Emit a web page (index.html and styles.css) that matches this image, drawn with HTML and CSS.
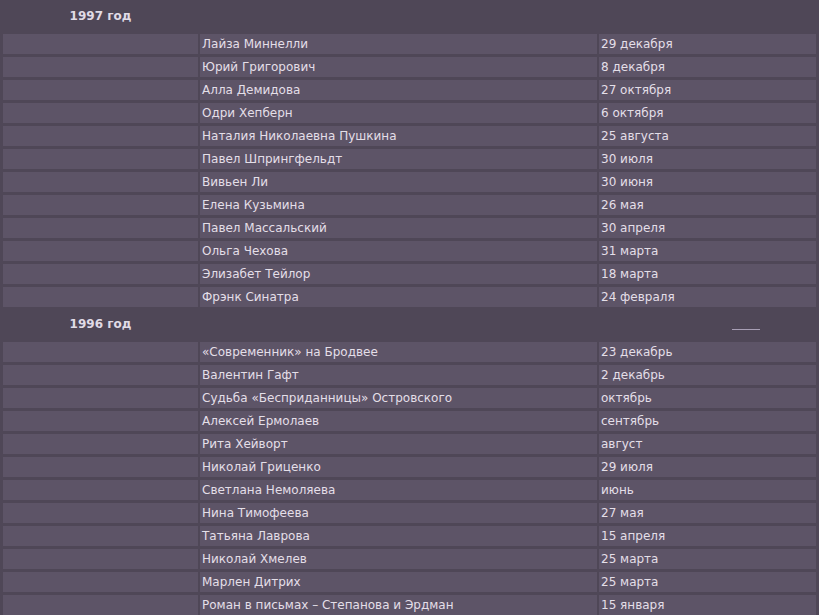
FILE: index.html
```html
<!DOCTYPE html>
<html lang="ru">
<head>
<meta charset="utf-8">
<title>Хроника</title>
<link rel="stylesheet" href="styles.css">
</head>
<body>
<table class="chron">
  <colgroup><col class="c1"><col class="c2"><col class="c3"></colgroup>
  <tr class="year"><td>1997 год</td><td></td><td></td></tr>
  <tr><td></td><td>Лайза Миннелли</td><td>29 декабря</td></tr>
  <tr><td></td><td>Юрий Григорович</td><td>8 декабря</td></tr>
  <tr><td></td><td>Алла Демидова</td><td>27 октября</td></tr>
  <tr><td></td><td>Одри Хепберн</td><td>6 октября</td></tr>
  <tr><td></td><td>Наталия Николаевна Пушкина</td><td>25 августа</td></tr>
  <tr><td></td><td>Павел Шпрингфельдт</td><td>30 июля</td></tr>
  <tr><td></td><td>Вивьен Ли</td><td>30 июня</td></tr>
  <tr><td></td><td>Елена Кузьмина</td><td>26 мая</td></tr>
  <tr><td></td><td>Павел Массальский</td><td>30 апреля</td></tr>
  <tr><td></td><td>Ольга Чехова</td><td>31 марта</td></tr>
  <tr><td></td><td>Элизабет Тейлор</td><td>18 марта</td></tr>
  <tr><td></td><td>Фрэнк Синатра</td><td>24 февраля</td></tr>
  <tr class="year"><td>1996 год</td><td></td><td><span class="rule"></span></td></tr>
  <tr><td></td><td>«Современник» на Бродвее</td><td>23 декабрь</td></tr>
  <tr><td></td><td>Валентин Гафт</td><td>2 декабрь</td></tr>
  <tr><td></td><td>Судьба «Бесприданницы» Островского</td><td>октябрь</td></tr>
  <tr><td></td><td>Алексей Ермолаев</td><td>сентябрь</td></tr>
  <tr><td></td><td>Рита Хейворт</td><td>август</td></tr>
  <tr><td></td><td>Николай Гриценко</td><td>29 июля</td></tr>
  <tr><td></td><td>Светлана Немоляева</td><td>июнь</td></tr>
  <tr><td></td><td>Нина Тимофеева</td><td>27 мая</td></tr>
  <tr><td></td><td>Татьяна Лаврова</td><td>15 апреля</td></tr>
  <tr><td></td><td>Николай Хмелев</td><td>25 марта</td></tr>
  <tr><td></td><td>Марлен Дитрих</td><td>25 марта</td></tr>
  <tr><td></td><td>Роман в письмах – Степанова и Эрдман</td><td>15 января</td></tr>
</table>
</body>
</html>
```

FILE: styles.css
```css
html, body {
  margin: 0;
  padding: 0;
  background: #4f4757;
  overflow: hidden;
}
body {
  padding: 0 1px;
  font-family: "DejaVu Sans", Verdana, sans-serif;
  font-size: 12px;
  color: #e4dfe8;
}
.chron {
  width: 817px;
  margin-top: -1px;
  border-collapse: separate;
  border-spacing: 2px 3px;
  table-layout: fixed;
}
.c1 { width: 195px; }
.c2 { width: 397px; }
.c3 { width: auto; }
.chron td {
  height: 20px;
  padding: 0 2px;
  background: #5d5467;
  white-space: nowrap;
  vertical-align: middle;
  line-height: 20px;
}
.chron tr.year td {
  height: 29px;
  background: transparent;
  text-align: center;
  font-weight: bold;
  color: #e0dbe6;
  line-height: 29px;
}
.chron tr.year td:last-child {
  text-align: left;
  position: relative;
}
.rule {
  position: absolute;
  left: 133px;
  top: 19px;
  width: 28px;
  height: 1px;
  background: #a89fb5;
}
```
